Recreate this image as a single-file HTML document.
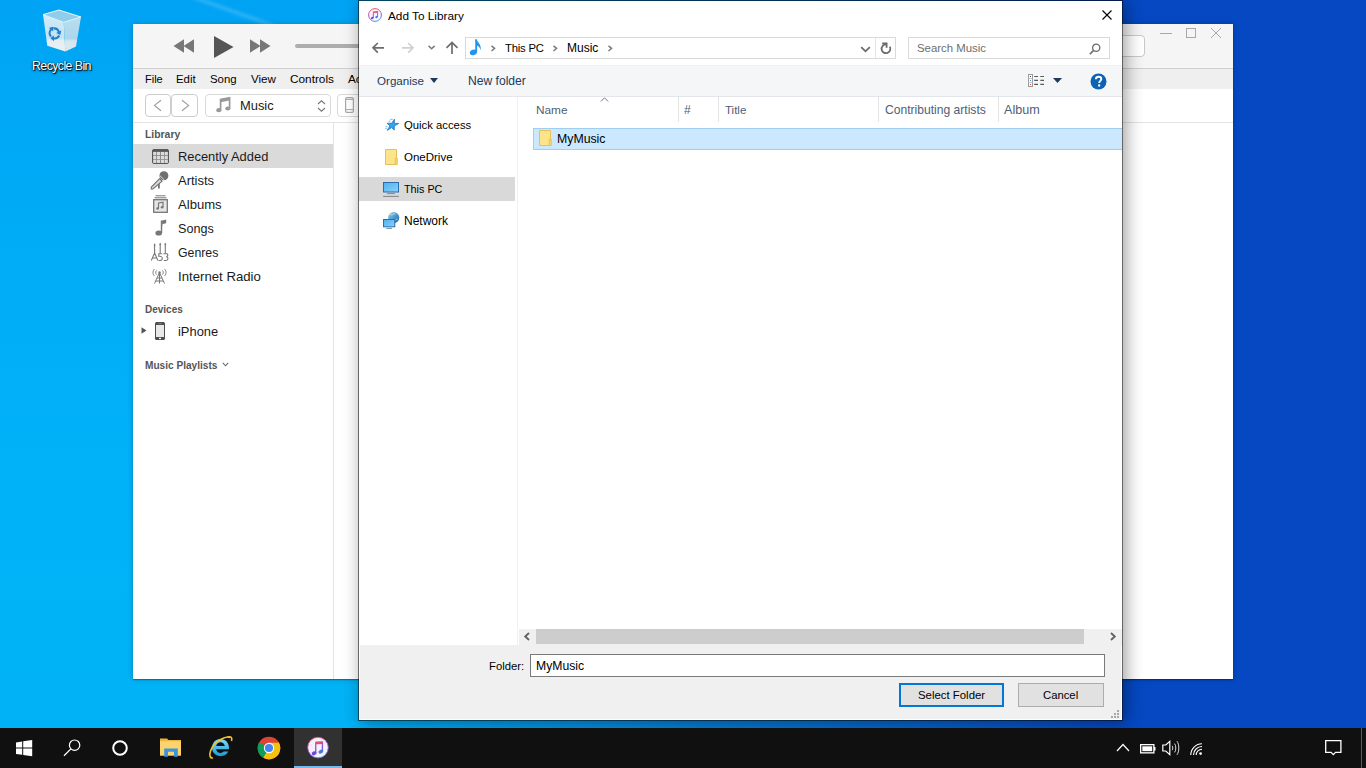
<!DOCTYPE html>
<html><head><meta charset="utf-8">
<style>
*{margin:0;padding:0;box-sizing:border-box}
html,body{width:1366px;height:768px;overflow:hidden}
body{position:relative;font-family:"Liberation Sans",sans-serif;font-size:12px;color:#000;background:linear-gradient(90deg,#01b0f6 0,#01b0f6 360px,#0878d0 740px,#0548c2 1120px)}
#bgl{position:absolute;left:0;top:0;width:360px;height:728px;background:linear-gradient(180deg,#00a3f4 0px,#00a8f5 95px,#00acf6 245px,#01b0f8 395px,#00b4f8 575px,#00b2f5 728px)}
.a{position:absolute}
.t{position:absolute;line-height:1;white-space:nowrap}
svg{position:absolute;overflow:visible}
</style></head><body>

<!-- ============ DESKTOP ============ -->
<div id="bgl"></div>
<svg style="left:0;top:0;filter:blur(1.5px)" width="360" height="30" viewBox="0 0 360 30"><path d="M190 -4 C215 5 245 16 285 30" fill="none" stroke="rgba(255,255,255,.16)" stroke-width="4"/></svg>
<svg style="left:40px;top:8px" width="46" height="46" viewBox="0 0 46 46">
  <defs>
    <linearGradient id="rbl" x1="0" y1="0" x2="0" y2="1"><stop offset="0" stop-color="#d2ebf7"/><stop offset=".62" stop-color="#c3e3f3"/><stop offset=".7" stop-color="#e4eef2"/><stop offset="1" stop-color="#eaf0f2"/></linearGradient>
    <linearGradient id="rbr" x1="0" y1="0" x2="0" y2="1"><stop offset="0" stop-color="#b9ddf0"/><stop offset=".62" stop-color="#acd6ec"/><stop offset=".7" stop-color="#d5e6ee"/><stop offset="1" stop-color="#dde9ee"/></linearGradient>
  </defs>
  <path d="M3 6.6 L23.75 14.4 L25.3 43.6 L7.3 37.8 Z" fill="url(#rbl)"/>
  <path d="M23.75 14.4 L41 9 L36 38.4 L25.3 43.6 Z" fill="url(#rbr)"/>
  <path d="M3 6.6 L19 2 L41 9 L23.75 14.4 Z" fill="#8fcdeb" stroke="#e8f6fc" stroke-width="1"/>
  <g transform="translate(14.5 25.5)" fill="#1f7fd0">
    <path d="M-1.5 -6 A6 6 0 0 1 5.2 -2.2 L6.8 -3.2 L5.8 1.6 L1.6 -0.4 L3.3 -1.2 A4 4 0 0 0 -0.8 -4 Z"/>
    <path d="M5.6 2.6 A6 6 0 0 1 -0.6 6 L-0.6 7.8 L-4.2 4.6 L-0.6 2 L-0.6 3.9 A4 4 0 0 0 3.8 1.6 Z"/>
    <path d="M-4.4 3.6 A6 6 0 0 1 -4.2 -4.6 L-5.8 -5.4 L-1.5 -6.8 L-1.2 -2.3 L-2.8 -3.2 A4 4 0 0 0 -2.6 2.6 Z"/>
  </g>
</svg>
<div class="t" style="left:32px;top:60px;color:#fff;font-size:12.4px;letter-spacing:-0.6px;text-shadow:0 0 1px #000,1px 1px 1px rgba(0,0,0,.9),0 1px 3px rgba(0,0,0,.6)">Recycle Bin</div>

<!-- ============ ITUNES ============ -->
<div class="a" id="it" style="left:133px;top:24px;width:1100px;height:655px;background:#fff;box-shadow:0 1px 1px rgba(0,0,0,.28),0 0 6px rgba(0,0,0,.2)"></div>
<div class="a" style="left:133px;top:24px;width:1100px;height:44px;background:#f5f5f5"></div>
<div class="a" style="left:133px;top:68px;width:1100px;height:1px;background:#cfcfcf"></div>
<div class="a" style="left:133px;top:69px;width:1100px;height:20px;background:#efefef"></div>
<div class="a" style="left:133px;top:122px;width:1100px;height:1px;background:#e3e3e3"></div>
<div class="a" style="left:333px;top:123px;width:1px;height:556px;background:#e3e3e3"></div>

<div id="it-menu">
  <div class="t" style="left:145px;top:74px;font-size:11px">File</div>
  <div class="t" style="left:176px;top:74px;font-size:11.4px">Edit</div>
  <div class="t" style="left:210px;top:74px;font-size:11.4px">Song</div>
  <div class="t" style="left:251px;top:73px;font-size:11.6px">View</div>
  <div class="t" style="left:290px;top:74px;font-size:11.8px">Controls</div>
  <div class="t" style="left:348px;top:74px;font-size:11.8px">Account</div>
</div>


<!-- itunes top controls -->
<svg style="left:173px;top:39px" width="22" height="14" viewBox="0 0 22 14">
  <path d="M0.5 7 L11 0.3 V13.7 Z M10.5 7 L21 0.3 V13.7 Z" fill="#777"/>
</svg>
<svg style="left:214px;top:36px" width="20" height="22" viewBox="0 0 20 22">
  <path d="M0 0 L19.5 11 L0 22 Z" fill="#555"/>
</svg>
<svg style="left:250px;top:39px" width="22" height="14" viewBox="0 0 22 14">
  <path d="M0 0.3 L10.5 7 L0 13.7 Z M10 0.3 L20.5 7 L10 13.7 Z" fill="#777"/>
</svg>
<div class="a" style="left:295px;top:44px;width:80px;height:4px;border-radius:2px;background:#adadad"></div>
<!-- right side of itunes top -->
<div class="a" style="left:1080px;top:35px;width:65px;height:22px;border:1px solid #c9c9c9;border-radius:4px;background:#fff"></div>
<div class="a" style="left:1160px;top:33px;width:12px;height:1px;background:#a8a8a8"></div>
<div class="a" style="left:1186px;top:28px;width:10px;height:10px;border:1px solid #a8a8a8"></div>
<svg style="left:1211px;top:28px" width="10" height="10" viewBox="0 0 10 10"><path d="M0 0 L10 10 M10 0 L0 10" stroke="#a8a8a8" stroke-width="1"/></svg>

<!-- itunes nav row -->
<div class="a" style="left:145px;top:94px;width:26px;height:23px;border:1px solid #cdcdcd;border-radius:4px;background:#fff"></div>
<div class="a" style="left:171px;top:94px;width:27px;height:23px;border:1px solid #cdcdcd;border-radius:4px;background:#fff"></div>
<svg style="left:153px;top:99px" width="9" height="13" viewBox="0 0 9 13"><path d="M8 1.2 L1.4 6.4 L8 11.8" fill="none" stroke="#9c9c9c" stroke-width="1.1"/></svg>
<svg style="left:181px;top:99px" width="9" height="13" viewBox="0 0 9 13"><path d="M1 1.2 L7.6 6.4 L1 11.8" fill="none" stroke="#9c9c9c" stroke-width="1.1"/></svg>
<div class="a" style="left:205px;top:94px;width:126px;height:23px;border:1px solid #d9d9d9;border-radius:4px;background:#fff"></div>
<svg style="left:216px;top:97px" width="15" height="16" viewBox="0 0 15 16">
  <path d="M4.6 13 V2.5 L13.6 0.8 V11.2" fill="none" stroke="#999" stroke-width="1.7"/>
  <path d="M4.6 2.5 L13.6 0.8 V3.6 L4.6 5.3 Z" fill="#999"/>
  <ellipse cx="2.8" cy="13.2" rx="2.6" ry="2.1" fill="#999"/>
  <ellipse cx="11.8" cy="11.5" rx="2.6" ry="2.1" fill="#999"/>
</svg>
<div class="t" style="left:240px;top:100px;font-size:12.9px;color:#1a1a1a">Music</div>
<svg style="left:317px;top:100px" width="9" height="12" viewBox="0 0 9 12"><path d="M1 4 L4.5 0.8 L8 4 M1 8 L4.5 11.2 L8 8" fill="none" stroke="#777" stroke-width="1.1"/></svg>
<div class="a" style="left:337px;top:94px;width:40px;height:23px;border:1px solid #d9d9d9;border-radius:4px;background:#fff"></div>
<svg style="left:345px;top:97px" width="9" height="16" viewBox="0 0 9 16"><rect x="0.6" y="0.6" width="7.8" height="14.8" rx="1.3" fill="none" stroke="#a8a8a8" stroke-width="1.2"/><path d="M0.6 2.4 H8.4 M0.6 12.6 H8.4" stroke="#a8a8a8" stroke-width="1"/><rect x="3.5" y="13.4" width="2" height="1.2" fill="#fff"/></svg>

<!-- itunes sidebar -->
<div class="t" style="left:145px;top:130px;font-size:10.4px;font-weight:bold;color:#555">Library</div>
<div class="a" style="left:133px;top:144px;width:200px;height:24px;background:#dadada"></div>
<svg style="left:152px;top:149px" width="17" height="15" viewBox="0 0 17 15">
  <rect x="0.5" y="0.5" width="16" height="14" rx="1.5" fill="#8c8c8c" stroke="#585858" stroke-width="1"/>
  <rect x="0.5" y="0.5" width="16" height="2.2" rx="1" fill="#585858"/>
  <g fill="#dcdcdc"><rect x="1.2" y="3" width="2.8" height="3.1"/><rect x="1.2" y="7" width="2.8" height="3"/><rect x="1.2" y="10.8" width="2.8" height="3.1"/><rect x="4.9" y="3" width="3.1" height="3.1"/><rect x="4.9" y="7" width="3.1" height="3"/><rect x="4.9" y="10.8" width="3.1" height="3.1"/><rect x="9" y="3" width="3.1" height="3.1"/><rect x="9" y="7" width="3.1" height="3"/><rect x="9" y="10.8" width="3.1" height="3.1"/><rect x="12.9" y="3" width="2.9" height="3.1"/><rect x="12.9" y="7" width="2.9" height="3"/><rect x="12.9" y="10.8" width="2.9" height="3.1"/></g>
</svg>
<div class="t" style="left:178px;top:151px;font-size:12.9px;color:#1a1a1a">Recently Added</div>
<svg style="left:148px;top:168px" width="24" height="24" viewBox="0 0 24 24">
  <path d="M10.9 14 V20.6" stroke="#6f6f6f" stroke-width="1.7"/>
  <path d="M11.6 10.6 L14.1 13.1 L5 20.9 L3.2 21 L3.3 19.2 Z" fill="#d9d9d9" stroke="#6f6f6f" stroke-width="1.1" stroke-linejoin="round"/>
  <circle cx="15.9" cy="7.8" r="4.5" fill="#6f6f6f"/>
  <path d="M11.6 7.4 L16.4 12" stroke="#e8e8e8" stroke-width="0.9"/>
</svg>
<div class="t" style="left:178px;top:174px;font-size:13px;color:#1a1a1a">Artists</div>
<svg style="left:153px;top:195px" width="15" height="18" viewBox="0 0 15 18">
  <path d="M2.5 0.8 H12.5 M1.5 2.8 H13.5" stroke="#777" stroke-width="1"/>
  <rect x="0.7" y="4.7" width="13.6" height="12.6" fill="#e6e6e6" stroke="#777" stroke-width="1.3"/>
  <path d="M5.5 13.5 V8 L10 7.2 V12" fill="none" stroke="#777" stroke-width="1.2"/>
  <circle cx="4.6" cy="13.5" r="1.3" fill="#777"/><circle cx="9.1" cy="12.2" r="1.3" fill="#777"/>
</svg>
<div class="t" style="left:178px;top:198px;font-size:13.1px;color:#1a1a1a">Albums</div>
<svg style="left:155px;top:220px" width="11" height="16" viewBox="0 0 11 16">
  <path d="M6.5 13 V1.2 C8 1.2 9.5 0.8 10.5 0.5 V2.5 C9.5 3 8 3.2 7.5 3.2" fill="#777" stroke="#777" stroke-width="1.4"/>
  <ellipse cx="3.7" cy="13" rx="3.3" ry="2.6" fill="#777"/>
</svg>
<div class="t" style="left:178px;top:223px;font-size:12.6px;color:#1a1a1a">Songs</div>
<svg style="left:148px;top:240px" width="24" height="24" viewBox="0 0 24 24">
  <g fill="none" stroke="#777" stroke-width="1.1">
    <path d="M6.6 4 V13.5 M12.2 3.5 V13.5 M17.3 3.5 V13.5"/>
    <path d="M3.3 20.5 L6.6 13 L9.9 20.5 M4.6 18 H8.6"/>
    <path d="M10.3 13.8 H14.2 M10.8 14 V16.3 C12.6 16 14.3 16.8 14.3 18.4 C14.3 20.2 12.5 20.5 10.5 20.5"/>
    <path d="M15.4 13.8 H19.2 C20.2 14.8 20 16.3 18.4 16.8 C20.6 17.2 20.6 20.5 17.6 20.5 H15.8"/>
  </g>
  <path d="M5.6 5.5 L6.6 3 L7.6 5.5 Z M11.2 5 L12.2 2.5 L13.2 5 Z M16.3 5 L17.3 2.5 L18.3 5 Z" fill="#777"/>
</svg>
<div class="t" style="left:178px;top:247px;font-size:12.3px;color:#1a1a1a">Genres</div>
<svg style="left:152px;top:268px" width="15" height="16" viewBox="0 0 15 16">
  <g fill="none" stroke="#777" stroke-width="1">
    <path d="M2.5 1 C0.5 3 0.5 6 2.5 8 M12.5 1 C14.5 3 14.5 6 12.5 8"/>
    <path d="M4.5 2.5 C3.5 3.5 3.5 5.5 4.5 6.5 M10.5 2.5 C11.5 3.5 11.5 5.5 10.5 6.5"/>
    <path d="M7.5 4.5 L2.5 15.5 M7.5 4.5 L12.5 15.5 M5 10 L10 10 M4 13 L11 13 M7.5 4.5 V15.5"/>
  </g>
  <circle cx="7.5" cy="4.5" r="1.2" fill="#777"/>
</svg>
<div class="t" style="left:178px;top:270px;font-size:13.2px;color:#1a1a1a">Internet Radio</div>
<div class="t" style="left:145px;top:305px;font-size:10px;font-weight:bold;color:#555">Devices</div>
<svg style="left:141px;top:327px" width="6" height="7" viewBox="0 0 6 7"><path d="M0.5 0.3 L5.5 3.5 L0.5 6.7 Z" fill="#555"/></svg>
<svg style="left:155px;top:322px" width="10" height="18" viewBox="0 0 10 18">
  <rect x="0" y="0" width="10" height="18" rx="1.6" fill="#4e4e4e"/>
  <rect x="1" y="3" width="8" height="12" fill="#e8e8e8"/>
  <rect x="3.5" y="1.1" width="3" height="0.9" fill="#8a8a8a"/>
  <rect x="4" y="15.8" width="2" height="1.3" fill="#fff"/>
</svg>
<div class="t" style="left:178px;top:326px;font-size:12.9px;color:#1a1a1a">iPhone</div>
<div class="t" style="left:145px;top:361px;font-size:10.1px;font-weight:bold;color:#555">Music Playlists</div>
<svg style="left:222px;top:362px" width="7" height="5" viewBox="0 0 7 5"><path d="M0.8 0.8 L3.5 3.8 L6.2 0.8" fill="none" stroke="#666" stroke-width="1.1"/></svg>

<!-- dialog shadow -->
<div class="a" style="left:358px;top:0;width:765px;height:721px;box-shadow:3px 2px 16px rgba(0,0,0,.38)"></div>

<!-- ============ DIALOG ============ -->
<div class="a" id="dlg" style="left:358px;top:0;width:765px;height:721px;background:#f0f0f0;background-clip:padding-box;border:1px solid rgba(0,0,0,.6);box-shadow:inset 1px 0 #fff,inset 0 -1px #fff,inset -1px 0 #fff">
</div>
<div class="a" style="left:359px;top:1px;width:763px;height:64px;background:#fff"></div>
<div class="a" style="left:359px;top:66px;width:763px;height:30px;background:#f5f6f7"></div>
<div class="a" style="left:359px;top:96px;width:763px;height:1px;background:#e3e6ea"></div>
<div class="a" style="left:359px;top:97px;width:763px;height:548px;background:#fff"></div>

<div class="t" style="left:388px;top:11px;font-size:11.8px">Add To Library</div>


<!-- title bar -->
<svg style="left:368px;top:8px" width="14" height="14" viewBox="0 0 14 14">
  <defs><linearGradient id="itg" x1="0.3" y1="0" x2="0.7" y2="1"><stop offset="0" stop-color="#f0506e"/><stop offset=".55" stop-color="#a050e0"/><stop offset="1" stop-color="#3a9ff0"/></linearGradient></defs>
  <circle cx="7" cy="7" r="6.4" fill="#fbf8fd" stroke="url(#itg)" stroke-width="1"/>
  <path d="M5.3 3.4 L9.7 3.0 V4.7 L5.3 5.1 Z" fill="#e0506e"/>
  <path d="M5.3 3.6 V9.8 M9.6 3.2 V8.8" stroke="url(#itg)" stroke-width="1"/>
  <ellipse cx="4.3" cy="9.9" rx="1.5" ry="1.1" transform="rotate(-25 4.3 9.9)" fill="#7048d8"/>
  <ellipse cx="8.6" cy="8.9" rx="1.5" ry="1.1" transform="rotate(-25 8.6 8.9)" fill="#4a80e0"/>
</svg>
<svg style="left:1102px;top:10px" width="10" height="10" viewBox="0 0 10 10">
  <path d="M0.5 0.5 L9.5 9.5 M9.5 0.5 L0.5 9.5" stroke="#000" stroke-width="1.1"/>
</svg>

<!-- address row -->
<svg style="left:371px;top:42px" width="14" height="12" viewBox="0 0 14 12">
  <path d="M13 5.8 H2 M6.8 1 L2 5.8 L6.8 10.6" fill="none" stroke="#6d6d6d" stroke-width="1.7"/>
</svg>
<svg style="left:401px;top:42px" width="14" height="12" viewBox="0 0 14 12">
  <path d="M1 5.8 H12 M7.2 1 L12 5.8 L7.2 10.6" fill="none" stroke="#d0d0d0" stroke-width="1.7"/>
</svg>
<svg style="left:427px;top:45px" width="9" height="5" viewBox="0 0 9 5">
  <path d="M1.6 0.9 L4.6 3.8 L7.6 0.9" fill="none" stroke="#7a7a7a" stroke-width="1.5"/>
</svg>
<svg style="left:445px;top:41px" width="13" height="14" viewBox="0 0 13 14">
  <path d="M7 13 V1.8 M1.5 6.8 L7 1.4 L12.5 6.8" fill="none" stroke="#6d6d6d" stroke-width="1.7"/>
</svg>
<div class="a" style="left:465px;top:37px;width:431px;height:22px;border:1px solid #d9d9d9;background:#fff"></div>
<div class="a" style="left:875px;top:38px;width:1px;height:20px;background:#e6e6e6"></div>
<svg style="left:469px;top:39px" width="14" height="17" viewBox="0 0 14 17">
  <path d="M7.2 0.5 V13" stroke="#1e95ee" stroke-width="1.9"/>
  <path d="M6.3 0.5 H7.6 C8.2 3.5 12.8 5 11.6 11.4 C11.2 8.4 9.6 6.8 7.6 6.4 Z" fill="#1e95ee"/>
  <ellipse cx="4.4" cy="13.4" rx="3.6" ry="2.7" transform="rotate(-20 4.4 13.4)" fill="#1e95ee"/>
</svg>
<svg style="left:490px;top:44px" width="6" height="8" viewBox="0 0 6 8"><path d="M1.5 1.8 L4.6 4.3 L1.5 7" fill="none" stroke="#7b7b7b" stroke-width="1.5"/></svg>
<div class="t" style="left:505px;top:43px;font-size:11.3px;letter-spacing:-0.2px">This PC</div>
<svg style="left:552px;top:44px" width="6" height="8" viewBox="0 0 6 8"><path d="M1.5 1.8 L4.6 4.3 L1.5 7" fill="none" stroke="#7b7b7b" stroke-width="1.5"/></svg>
<div class="t" style="left:567px;top:42px;font-size:12px">Music</div>
<svg style="left:607px;top:44px" width="6" height="8" viewBox="0 0 6 8"><path d="M1.5 1.8 L4.6 4.3 L1.5 7" fill="none" stroke="#7b7b7b" stroke-width="1.5"/></svg>
<svg style="left:860px;top:46px" width="11" height="7" viewBox="0 0 11 7"><path d="M1.2 1.2 L5.5 5.3 L9.8 1.2" fill="none" stroke="#6b6b6b" stroke-width="1.8"/></svg>
<svg style="left:880px;top:42px" width="12" height="13" viewBox="0 0 12 13">
  <path d="M6 2.4 A4.4 4.4 0 1 0 9.8 4.6" fill="none" stroke="#6b6b6b" stroke-width="1.8"/>
  <path d="M2.2 1.5 H6.6 V5.8" fill="none" stroke="#6b6b6b" stroke-width="1.8"/>
</svg>
<div class="a" style="left:908px;top:37px;width:202px;height:22px;border:1px solid #d9d9d9;background:#fff"></div>
<div class="t" style="left:917px;top:43px;font-size:11.4px;color:#6d6d6d">Search Music</div>
<svg style="left:1089px;top:43px" width="12" height="12" viewBox="0 0 12 12">
  <circle cx="7.2" cy="4.8" r="3.6" fill="none" stroke="#6b6b6b" stroke-width="1.3"/>
  <path d="M4.6 7.4 L0.8 11.2" stroke="#6b6b6b" stroke-width="1.6"/>
</svg>

<!-- command bar -->
<div class="t" style="left:377px;top:75px;font-size:11.6px;color:#1e395b">Organise</div>
<svg style="left:430px;top:78px" width="8" height="5" viewBox="0 0 8 5"><path d="M0 0 H8 L4 5 Z" fill="#1e395b"/></svg>
<div class="t" style="left:468px;top:75px;font-size:12.1px;color:#1e395b">New folder</div>
<svg style="left:1028px;top:74px" width="17" height="13" viewBox="0 0 17 13">
  <rect x="0.5" y="0.5" width="4" height="12" fill="#fff" stroke="#9a9a9a" stroke-width="1"/>
  <path d="M0.5 4.5 H4.5 M0.5 8.5 H4.5" stroke="#c8c8c8" stroke-width="1"/>
  <rect x="2" y="2" width="1" height="1" fill="#444"/><rect x="2" y="6" width="1" height="1" fill="#4a90d0"/><rect x="2" y="10" width="1" height="1" fill="#c04040"/>
  <path d="M6.2 2.5 H10 M12.3 2.5 H16 M6.2 6.4 H10 M12.3 6.4 H16 M6.2 10.3 H10 M12.3 10.3 H16" stroke="#5a5a5a" stroke-width="1.2"/>
</svg>
<svg style="left:1053px;top:78px" width="9" height="5" viewBox="0 0 9 5"><path d="M0 0 H9 L4.5 5 Z" fill="#1e395b"/></svg>
<svg style="left:1090px;top:72.5px" width="17" height="17" viewBox="0 0 17 17">
  <circle cx="8.5" cy="8.5" r="8" fill="#0c63b6"/>
  <path d="M5.8 6.3 C5.8 4.6 7 3.7 8.6 3.7 C10.3 3.7 11.3 4.7 11.3 6 C11.3 7.8 9.2 8 9.2 10" fill="none" stroke="#fff" stroke-width="1.9"/>
  <rect x="8.1" y="11.4" width="2.1" height="2.1" fill="#fff"/>
</svg>

<!-- nav pane -->
<div class="a" style="left:517px;top:97px;width:1px;height:548px;background:#f0f0f0"></div>
<div class="a" style="left:359px;top:177px;width:156px;height:24px;background:#d9d9d9"></div>
<svg style="left:384px;top:118px" width="16" height="14" viewBox="0 0 16 14">
  <path d="M10.4 1.2 L10.35 5.4 L14.8 5.4 L10.32 7.97 L10.25 12.1 L7.58 9.62 L3.2 12.4 L5.88 8.0 L3.06 5.25 L7.58 5.36 Z" fill="#2ea3f0" stroke="#1f78c0" stroke-width="0.8" stroke-linejoin="round"/>
  <path d="M6.2 1.3 H8.7 M4.6 3.2 H6.5 M1.8 8.4 H3.4 M1.2 10.25 H3" stroke="#6bb6e8" stroke-width="0.9"/>
</svg>
<div class="t" style="left:404px;top:120px;font-size:11.3px">Quick access</div>
<svg style="left:385px;top:149px" width="13" height="16" viewBox="0 0 13 16">
  <path d="M0.5 0.5 H11.5 V15.5 H0.5 Z" fill="#fde48a" stroke="#e3c25c" stroke-width="1"/>
  <path d="M10 9 H12.5 V15.5 H10 Z" fill="#f5d060" stroke="#e3c25c" stroke-width="0.6"/>
</svg>
<div class="t" style="left:404px;top:152px;font-size:11.5px">OneDrive</div>
<svg style="left:382px;top:181px" width="18" height="17" viewBox="0 0 18 17">
  <defs><linearGradient id="pcg" x1="0" y1="0" x2="1" y2="1"><stop offset="0" stop-color="#4fb0ee"/><stop offset="1" stop-color="#8ad3f9"/></linearGradient></defs>
  <rect x="1.5" y="1.5" width="15" height="9.5" fill="url(#pcg)" stroke="#2a6cad" stroke-width="1"/>
  <path d="M5.2 12.6 H12.8" stroke="#6a8fb0" stroke-width="1"/>
  <path d="M1.1 15.4 H16.9" stroke="#8a8a8a" stroke-width="1.1"/>
</svg>
<div class="t" style="left:404px;top:184px;font-size:10.8px">This PC</div>
<svg style="left:382px;top:211px" width="18" height="19" viewBox="0 0 18 19">
  <defs><linearGradient id="nwg" x1="0" y1="0" x2="1" y2="1"><stop offset="0" stop-color="#9fd3f0"/><stop offset=".6" stop-color="#3f8fc8"/><stop offset="1" stop-color="#22679e"/></linearGradient>
  <linearGradient id="nwm" x1="0" y1="0" x2="1" y2="1"><stop offset="0" stop-color="#4fb0ee"/><stop offset="1" stop-color="#8ad3f9"/></linearGradient></defs>
  <circle cx="11.7" cy="6.6" r="5.6" fill="url(#nwg)"/>
  <path d="M8 3.5 C10 4.5 11 3 13 2.5 M9.5 9 C11 8 13 9.5 15.5 8" fill="none" stroke="#d8eefa" stroke-width="0.8" opacity=".8"/>
  <rect x="1.5" y="8.5" width="11.3" height="7.3" fill="url(#nwm)" stroke="#2a6cad" stroke-width="1"/>
  <path d="M4.2 17.4 H10" stroke="#6a8fb0" stroke-width="1"/>
</svg>
<div class="t" style="left:404px;top:215px;font-size:12px">Network</div>

<!-- column headers -->
<svg style="left:600px;top:97px" width="9" height="5" viewBox="0 0 9 5"><path d="M0.8 4.5 L4.5 0.8 L8.2 4.5" fill="none" stroke="#7b7b7b" stroke-width="1"/></svg>
<div class="t" style="left:536px;top:105px;font-size:11.8px;color:#4c607a">Name</div>
<div class="a" style="left:678px;top:97px;width:1px;height:25px;background:#e5e5e5"></div>
<div class="t" style="left:684px;top:104px;font-size:12px;color:#4c607a">#</div>
<div class="a" style="left:718px;top:97px;width:1px;height:25px;background:#e5e5e5"></div>
<div class="t" style="left:725px;top:105px;font-size:11.5px;color:#4c607a">Title</div>
<div class="a" style="left:878px;top:97px;width:1px;height:25px;background:#e5e5e5"></div>
<div class="t" style="left:885px;top:104px;font-size:12.1px;color:#4c607a">Contributing artists</div>
<div class="a" style="left:998px;top:97px;width:1px;height:25px;background:#e5e5e5"></div>
<div class="t" style="left:1004px;top:104px;font-size:12.6px;color:#4c607a">Album</div>

<!-- selected row -->
<div class="a" style="left:533px;top:128px;width:589px;height:22px;background:#cce8ff;border:1px solid #a0cdf2;border-right:none"></div>
<svg style="left:539px;top:130px" width="13" height="16" viewBox="0 0 13 16">
  <path d="M0.5 0.5 H11.5 V15.5 H0.5 Z" fill="#fde48a" stroke="#e3c25c" stroke-width="1"/>
  <path d="M10 9 H12.5 V15.5 H10 Z" fill="#f5d060" stroke="#e3c25c" stroke-width="0.6"/>
</svg>
<div class="t" style="left:557px;top:133px;font-size:12.3px">MyMusic</div>

<!-- horizontal scrollbar -->
<div class="a" style="left:519px;top:629px;width:603px;height:16px;background:#f0f0f0"></div>
<div class="a" style="left:536px;top:629px;width:548px;height:15px;background:#cdcdcd"></div>
<svg style="left:523px;top:632px" width="8" height="9" viewBox="0 0 8 9"><path d="M6 1 L2.2 4.5 L6 8" fill="none" stroke="#606060" stroke-width="1.8"/></svg>
<svg style="left:1109px;top:632px" width="8" height="9" viewBox="0 0 8 9"><path d="M2 1 L5.8 4.5 L2 8" fill="none" stroke="#606060" stroke-width="1.8"/></svg>

<!-- bottom -->
<div class="t" style="left:489px;top:661px;font-size:11.3px">Folder:</div>
<div class="a" style="left:530px;top:654px;width:575px;height:23px;background:#fff;border:1px solid #7a7a7a"></div>
<div class="t" style="left:536px;top:660px;font-size:12.2px">MyMusic</div>
<div class="a" style="left:899px;top:683px;width:105px;height:24px;background:#e1e1e1;border:2px solid #0078d7"></div>
<div class="t" style="left:918px;top:690px;font-size:11.4px">Select Folder</div>
<div class="a" style="left:1018px;top:683px;width:86px;height:24px;background:#e1e1e1;border:1px solid #adadad"></div>
<div class="t" style="left:1043px;top:690px;font-size:11.3px">Cancel</div>
<svg style="left:1111px;top:710px" width="10" height="10" viewBox="0 0 10 10">
  <rect x="6" y="0" width="2" height="2" fill="#a8a8a8"/><rect x="3" y="3" width="2" height="2" fill="#a8a8a8"/><rect x="6" y="3" width="2" height="2" fill="#a8a8a8"/>
  <rect x="0" y="6" width="2" height="2" fill="#a8a8a8"/><rect x="3" y="6" width="2" height="2" fill="#a8a8a8"/><rect x="6" y="6" width="2" height="2" fill="#a8a8a8"/>
</svg>

<!-- taskbar -->
<div class="a" style="left:0;top:728px;width:1366px;height:40px;background:#101010"></div>
<svg style="left:16px;top:740px" width="17" height="17" viewBox="0 0 17 17">
  <path d="M0 2.4 L6.2 1.5 V7.6 H0 Z M7.2 1.35 L16.2 0 V7.6 H7.2 Z M0 8.6 H6.2 V14.7 L0 13.9 Z M7.2 8.6 H16.2 V16.3 L7.2 14.9 Z" fill="#fff"/>
</svg>
<svg style="left:63px;top:739px" width="18" height="18" viewBox="0 0 18 18">
  <circle cx="11.6" cy="6.2" r="5.2" fill="none" stroke="#fff" stroke-width="1.2"/>
  <path d="M7.9 9.9 L1 16.8" stroke="#fff" stroke-width="1.3"/>
</svg>
<svg style="left:112px;top:740px" width="16" height="16" viewBox="0 0 16 16">
  <circle cx="8" cy="8" r="6.8" fill="none" stroke="#fff" stroke-width="2"/>
</svg>
<svg style="left:159px;top:737px" width="24" height="21" viewBox="0 0 24 21">
  <path d="M1 1.5 H8 L9.5 3 H22 V18.5 H1 Z" fill="#e9b83c"/>
  <path d="M1 4.2 H22 V18.5 H1 Z" fill="#fcd36c"/>
  <path d="M5.2 11.5 H18.8 V19.8 H15 V14.8 H9 V19.8 H5.2 Z" fill="#3d94dc"/>
</svg>
<svg style="left:208px;top:735px" width="25" height="25" viewBox="0 0 25 25">
  <defs><linearGradient id="ieg" x1="0" y1="0" x2="0" y2="1"><stop offset="0" stop-color="#7fdcf8"/><stop offset="1" stop-color="#1a9ad8"/></linearGradient></defs>
  <path d="M12.5 4 C7.5 4 4 8 4 12.8 C4 17.8 7.8 21.2 12.6 21.2 C16 21.2 18.8 19.5 20.3 16.6 H15.6 C14.8 17.6 13.8 18 12.6 18 C10.3 18 8.4 16.4 8.1 14.2 H20.9 C21 13.7 21 13.2 21 12.8 C21 8 17.6 4 12.5 4 Z M8.2 11 C8.6 8.8 10.3 7.3 12.5 7.3 C14.7 7.3 16.4 8.8 16.8 11 Z" fill="url(#ieg)"/>
  <path d="M22 2.5 C18 0.5 6 6 2.5 16 C1 20.5 2 23.5 5 23" fill="none" stroke="#f2c12e" stroke-width="1.6"/>
  <path d="M19.5 2 C23 1 24.5 2.5 23.5 6" fill="none" stroke="#f2c12e" stroke-width="1.6"/>
</svg>
<svg style="left:257px;top:736px" width="24" height="24" viewBox="0 0 24 24">
  <circle cx="12" cy="12" r="11.3" fill="#db4437"/>
  <path d="M12 12 L2.2 6.35 A11.3 11.3 0 0 0 6.35 21.8 Z" fill="#0f9d58"/>
  <path d="M12 12 L6.35 21.8 A11.3 11.3 0 0 0 23.3 12 L21.8 6.35 Z" fill="#f4c20d"/>
  <path d="M12 12 L12 6.8 H21.8 A11.3 11.3 0 0 1 23.3 12 Z" fill="#f4c20d"/>
  <circle cx="12" cy="12" r="5.2" fill="#fff"/>
  <circle cx="12" cy="12" r="4.1" fill="#4285f4"/>
</svg>
<div class="a" style="left:294px;top:728px;width:48px;height:40px;background:#313131"></div>
<div class="a" style="left:294px;top:766px;width:48px;height:2px;background:#76b9ed"></div>
<svg style="left:307px;top:737px" width="22" height="22" viewBox="0 0 22 22">
  <defs><linearGradient id="itg2" x1="0.3" y1="0" x2="0.7" y2="1"><stop offset="0" stop-color="#f0506e"/><stop offset=".55" stop-color="#a050e0"/><stop offset="1" stop-color="#3a8ff0"/></linearGradient>
  <linearGradient id="itn2" x1="0" y1="0" x2="0.3" y2="1"><stop offset="0" stop-color="#f04f6a"/><stop offset=".5" stop-color="#9a4fd0"/><stop offset="1" stop-color="#5a5ee0"/></linearGradient></defs>
  <circle cx="11" cy="10.6" r="10.3" fill="#f6f0fa" stroke="url(#itg2)" stroke-width="0.9"/>
  <path d="M8.75 4.6 L15.6 4.2 V6.9 L8.75 7.3 Z" fill="#e8506a"/>
  <path d="M8.75 5 V16.2 M15.4 4.5 V14.6" stroke="url(#itn2)" stroke-width="1.3"/>
  <ellipse cx="7.1" cy="16.3" rx="2.5" ry="1.9" transform="rotate(-25 7.1 16.3)" fill="#6a48d8"/>
  <ellipse cx="13.9" cy="14.6" rx="2.5" ry="1.9" transform="rotate(-25 13.9 14.6)" fill="#4a78d8"/>
</svg>
<!-- tray -->
<svg style="left:1116px;top:743px" width="14" height="9" viewBox="0 0 14 9"><path d="M1 8 L7 1.5 L13 8" fill="none" stroke="#fff" stroke-width="1.2"/></svg>
<svg style="left:1140px;top:744px" width="16" height="10" viewBox="0 0 16 10">
  <rect x="0.65" y="0.65" width="13.2" height="8.2" fill="none" stroke="#fff" stroke-width="1.3"/>
  <rect x="2.3" y="2.3" width="9.9" height="4.9" fill="#fff"/>
  <rect x="14" y="3" width="1.5" height="3.5" fill="#fff"/>
</svg>
<svg style="left:1162px;top:740px" width="18" height="16" viewBox="0 0 18 16">
  <path d="M0.8 5 H3.8 L7.8 1.3 V14.7 L3.8 11 H0.8 Z" fill="none" stroke="#fff" stroke-width="1.2"/>
  <path d="M10.2 5.8 C11 6.8 11 9.2 10.2 10.2 M12.6 3.6 C14.2 5.6 14.2 10.4 12.6 12.4 M15 1.2 C17.4 4.4 17.4 11.6 15 14.8" fill="none" stroke="#fff" stroke-width="1" opacity=".85"/>
</svg>
<svg style="left:1190px;top:743px" width="13" height="12" viewBox="0 0 13 12">
  <path d="M0.8 12 A11.2 11.2 0 0 1 12 0.8 M3.5 12 A8.5 8.5 0 0 1 12 3.5 M6.2 12 A5.8 5.8 0 0 1 12 6.2" fill="none" stroke="#fff" stroke-width="1.1"/>
  <circle cx="10.6" cy="10.6" r="1.4" fill="#fff"/>
</svg>
<svg style="left:1325px;top:740px" width="17" height="17" viewBox="0 0 17 17">
  <path d="M0.7 0.7 H15.9 V12.3 H10.5 L8.3 14.6 L6.1 12.3 H0.7 Z" fill="none" stroke="#fff" stroke-width="1.3"/>
</svg>
<div class="a" style="left:1361px;top:728px;width:1px;height:40px;background:#5a5a5a"></div>

</body></html>
